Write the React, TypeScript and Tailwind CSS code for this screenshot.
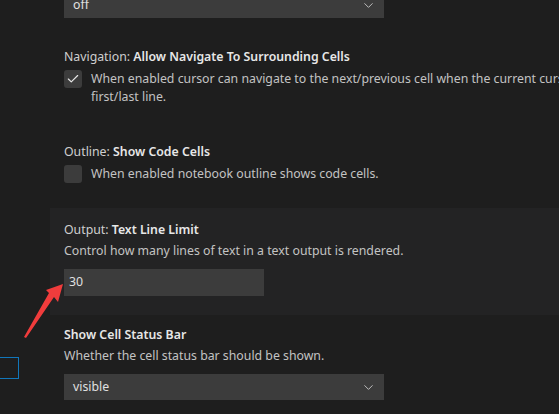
import { ChevronDown, Check } from 'lucide-react';

const font = { fontFamily: '"Noto Sans", "Open Sans", sans-serif' };

function Select({ value }: { value: string }) {
  return (
    <div className="flex h-[26px] w-[320px] items-center justify-between bg-[#3c3c3c] pl-[9px] pr-[8px] text-[12.3px] text-[#e0e0e0]">
      <span>{value}</span>
      <ChevronDown className="h-[15px] w-[15px] text-[#c5c5c5]" strokeWidth={1.5} />
    </div>
  );
}

function Title({ cat, name }: { cat: string; name: string }) {
  return (
    <div className="h-[18px] text-[12.3px] leading-[18px] text-[#cfcfcf]">
      {cat && <span>{cat}: </span>}
      <span className="font-semibold text-[#e7e7e7]">{name}</span>
    </div>
  );
}

function CheckRow({ checked, lines }: { checked: boolean; lines: string[] }) {
  return (
    <div className="mt-[4px] flex gap-[9px]">
      <div className="flex h-[18px] w-[18px] shrink-0 items-center justify-center rounded-[3px] bg-[#3c3c3c]">
        {checked && <Check className="h-[14px] w-[14px] text-[#e8e8e8]" strokeWidth={2} />}
      </div>
      <div className="whitespace-nowrap text-[12.3px] leading-[18px] text-[#c3c3c3]">
        {lines.map((l) => (
          <div key={l}>{l}</div>
        ))}
      </div>
    </div>
  );
}

function Arrow() {
  return (
    <svg className="pointer-events-none absolute left-0 top-0" width="80" height="360" viewBox="0 0 80 360">
      <polygon points="63,284 58,302 54,297 26,338 24,337 49,293 46,290" fill="#f03c3c" />
    </svg>
  );
}

export default function App() {
  return (
    <div className="relative h-[414px] w-[559px] overflow-hidden bg-[#1e1e1e]" style={font}>
      <div className="flex">
        <div className="w-[50px] shrink-0 pt-[357px]">
          <div className="ml-[-2px] h-[22px] w-[21px] border border-[#1177bb]" />
        </div>
        <div className="min-w-0 flex-1">
          <div className="mt-[-8px] pl-[14px]">
            <Select value="off" />
          </div>

          <div className="pl-[14px] pt-[30px]">
            <Title cat="Navigation" name="Allow Navigate To Surrounding Cells" />
            <CheckRow
              checked
              lines={[
                'When enabled cursor can navigate to the next/previous cell when the current cursor in the cell editor is at the',
                'first/last line.',
              ]}
            />
          </div>

          <div className="pl-[14px] pt-[37px]">
            <Title cat="Outline" name="Show Code Cells" />
            <CheckRow checked={false} lines={['When enabled notebook outline shows code cells.']} />
          </div>

          <div className="mt-[25px] bg-[#232324] pb-[19px] pl-[14px] pt-[13px]">
            <Title cat="Output" name="Text Line Limit" />
            <div className="mt-[3px] text-[12.3px] leading-[18px] text-[#c3c3c3]">
              Control how many lines of text in a text output is rendered.
            </div>
            <div className="mt-[9px] flex h-[27px] w-[200px] items-center bg-[#3c3c3c] pl-[5px] text-[12.3px] text-[#e0e0e0]">
              30
            </div>
          </div>

          <div className="pl-[14px] pt-[11px]">
            <Title cat="" name="Show Cell Status Bar" />
            <div className="mt-[3px] text-[12.3px] leading-[18px] text-[#c3c3c3]">
              Whether the cell status bar should be shown.
            </div>
            <div className="mt-[9px]">
              <Select value="visible" />
            </div>
          </div>
        </div>
      </div>
      <Arrow />
    </div>
  );
}
